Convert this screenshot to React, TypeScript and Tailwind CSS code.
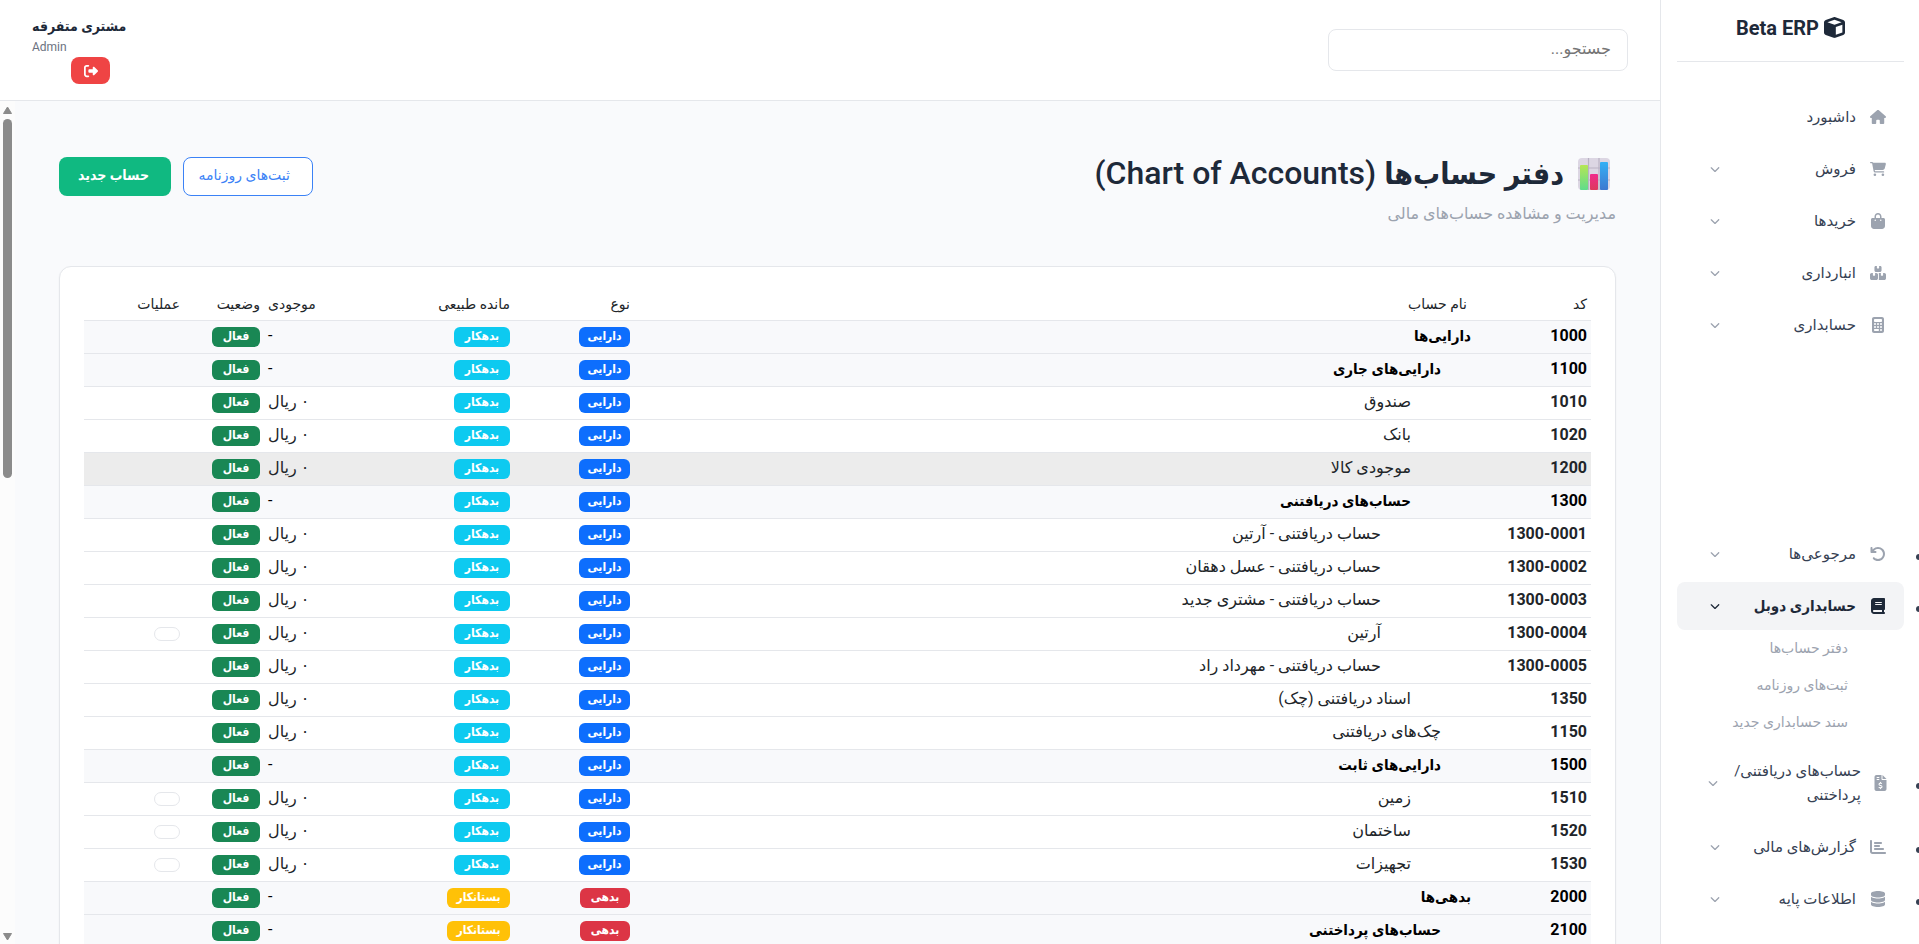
import type { ReactNode } from "react";
import type { IconType } from "react-icons";
import {
  FaArrowRotateLeft,
  FaBagShopping,
  FaBook,
  FaBoxesStacked,
  FaCalculator,
  FaCartShopping,
  FaChartBar,
  FaChevronDown,
  FaCube,
  FaDatabase,
  FaFileInvoiceDollar,
  FaHouse,
  FaRightFromBracket,
} from "react-icons/fa6";

type NavItem = {
  label: string;
  icon: IconType;
  active?: boolean;
  wide?: boolean;
  plain?: boolean;
  children?: string[];
};

const mainNav: NavItem[] = [
  { label: "داشبورد", icon: FaHouse, plain: true },
  { label: "فروش", icon: FaCartShopping },
  { label: "خریدها", icon: FaBagShopping },
  { label: "انبارداری", icon: FaBoxesStacked },
  { label: "حسابداری", icon: FaCalculator },
];

const extraNav: NavItem[] = [
  { label: "مرجوعی‌ها", icon: FaArrowRotateLeft },
  {
    label: "حسابداری دوبل",
    icon: FaBook,
    active: true,
    children: ["دفتر حساب‌ها", "ثبت‌های روزنامه", "سند حسابداری جدید"],
  },
  {
    label: "حساب‌های دریافتنی/پرداختنی",
    icon: FaFileInvoiceDollar,
    wide: true,
  },
  { label: "گزارش‌های مالی", icon: FaChartBar },
  { label: "اطلاعات پایه", icon: FaDatabase },
];

type Account = {
  code: string;
  name: string;
  level: 0 | 1 | 2 | 3;
  group?: boolean;
  hovered?: boolean;
  editable?: boolean;
  debt?: boolean;
};

const accounts: Account[] = [
  { code: "1000", name: "دارایی‌ها", level: 0, group: true },
  { code: "1100", name: "دارایی‌های جاری", level: 1, group: true },
  { code: "1010", name: "صندوق", level: 2 },
  { code: "1020", name: "بانک", level: 2 },
  { code: "1200", name: "موجودی کالا", level: 2, hovered: true },
  { code: "1300", name: "حساب‌های دریافتنی", level: 2, group: true },
  { code: "1300-0001", name: "حساب دریافتنی - آرتین", level: 3 },
  { code: "1300-0002", name: "حساب دریافتنی - عسل دهقان", level: 3 },
  { code: "1300-0003", name: "حساب دریافتنی - مشتری جدید", level: 3 },
  { code: "1300-0004", name: "آرتین", level: 3, editable: true },
  { code: "1300-0005", name: "حساب دریافتنی - مهرداد راد", level: 3 },
  { code: "1350", name: "اسناد دریافتنی (چک)", level: 2 },
  { code: "1150", name: "چک‌های دریافتنی", level: 1 },
  { code: "1500", name: "دارایی‌های ثابت", level: 1, group: true },
  { code: "1510", name: "زمین", level: 2, editable: true },
  { code: "1520", name: "ساختمان", level: 2, editable: true },
  { code: "1530", name: "تجهیزات", level: 2, editable: true },
  { code: "2000", name: "بدهی‌ها", level: 0, group: true, debt: true },
  { code: "2100", name: "حساب‌های پرداختنی", level: 1, group: true, debt: true },
];

const indent = ["pr-0", "pr-[30px]", "pr-[60px]", "pr-[90px]"];

// the bold Persian face runs wide, so bold labels use the condensed cut
const boldFont = "font-[Roboto,'DejaVu_Sans_Condensed','DejaVu_Sans',sans-serif]";

function Badge({ className, children }: { className: string; children: ReactNode }) {
  return (
    <span
      className={`flex h-5 items-center justify-center rounded-md pb-[2px] text-xs font-bold text-white ${boldFont} ${className}`}
    >
      {children}
    </span>
  );
}

function NavEntry({ item, bullet }: { item: NavItem; bullet?: boolean }) {
  const Icon = item.icon;
  return (
    <li className="relative mb-1">
      {bullet && (
        <span className="absolute top-1/2 -right-[18px] size-[6px] rounded-full bg-gray-700" />
      )}
      <a
        href="#"
        className={`flex items-center rounded-lg px-4 py-3 text-[15px] leading-6 ${
          item.active ? `bg-gray-100 font-semibold text-gray-800 ${boldFont}` : "text-gray-700"
        }`}
      >
        <span
          className={`flex shrink-0 justify-center ${item.wide ? "w-[15px]" : "w-5"} ${
            item.active ? "text-gray-800" : "text-[#9ca3af]"
          }`}
        >
          <Icon className="h-4 w-auto" />
        </span>
        <span className="mr-3 flex-1">{item.label}</span>
        {!item.plain && (
          <FaChevronDown
            className={`size-[10px] shrink-0 ${item.wide ? "ml-[15px]" : "ml-[17px]"} ${
              item.active ? "text-gray-800" : "text-[#9ca3af]"
            }`}
          />
        )}
      </a>
    </li>
  );
}

function Sidebar() {
  return (
    <aside className="w-[259px] shrink-0 border-l border-gray-200 bg-white pr-[15px] pl-4">
      <div className="flex h-[62px] items-start justify-center gap-[5px] border-b border-gray-200 pt-[14px] text-xl leading-7 font-bold text-gray-800">
        <FaCube className="mt-[3px] h-[21px] w-auto" />
        <span>Beta ERP</span>
      </div>
      <nav className="pt-[31px]">
        <ul>
          {mainNav.map((item) => (
            <NavEntry key={item.label} item={item} />
          ))}
        </ul>
        <ul className="mt-[181px]">
          {extraNav.map((item) => (
            <div key={item.label} className="contents">
              <NavEntry item={item} bullet />
              {item.children && (
                <li>
                  <ul className="-mt-1 mb-[6px] pr-14">
                    {item.children.map((child) => (
                      <li key={child}>
                        <a href="#" className="block text-sm leading-[37px] text-[#9ca3af]">
                          {child}
                        </a>
                      </li>
                    ))}
                  </ul>
                </li>
              )}
            </div>
          ))}
        </ul>
      </nav>
    </aside>
  );
}

function Topbar() {
  return (
    <header className="flex h-[101px] shrink-0 items-start justify-between border-b border-gray-200 bg-white px-8">
      <input
        type="search"
        aria-label="جستجو"
        placeholder="جستجو..."
        className="mt-[29px] h-[42px] w-[300px] rounded-lg border border-gray-200 px-4 pb-[3px] text-base placeholder:text-[#757575]"
      />
      <div className="flex flex-col pt-[14px]">
        <span className={`text-sm leading-6 font-semibold text-gray-800 ${boldFont}`}>
          مشتری متفرقه
        </span>
        <span className="text-left text-xs leading-[19px] text-[#6b7280]">Admin</span>
        <button
          type="button"
          aria-label="خروج"
          className="mr-4 flex h-[27px] w-[39px] items-center justify-center rounded-lg bg-[#ef4444] text-white"
        >
          <FaRightFromBracket className="size-[14px]" />
        </button>
      </div>
    </header>
  );
}

function ChartEmoji() {
  return (
    <svg viewBox="0 0 32 32" className="size-8" aria-hidden="true">
      <defs>
        <linearGradient id="green" x1="0" y1="0" x2="0" y2="1">
          <stop offset="0" stopColor="#b5e655" />
          <stop offset="1" stopColor="#5fdc8c" />
        </linearGradient>
        <linearGradient id="pink" x1="0" y1="0" x2="0" y2="1">
          <stop offset="0" stopColor="#f02a8c" />
          <stop offset="1" stopColor="#dd3a5c" />
        </linearGradient>
        <linearGradient id="blue" x1="0" y1="0" x2="0" y2="1">
          <stop offset="0" stopColor="#33b0f5" />
          <stop offset="1" stopColor="#3f78d0" />
        </linearGradient>
      </defs>
      <rect x="0" y="0" width="32" height="32" rx="4" fill="#dcd6e3" />
      <path d="M10.5 0v32M21 0v32M0 10h32M0 22h32" stroke="#b9b1c4" strokeWidth="1.2" />
      <rect x="2" y="7" width="8" height="25" rx="1" fill="url(#green)" />
      <rect x="12" y="16" width="8" height="16" rx="1" fill="url(#pink)" />
      <rect x="22" y="4" width="8" height="28" rx="1" fill="url(#blue)" />
    </svg>
  );
}

function AccountRow({ account }: { account: Account }) {
  const { group, hovered, debt } = account;
  const tone = group
    ? "bg-[#f8f9fb] text-black"
    : hovered
      ? "bg-[#ececec] text-[#212529]"
      : "text-[#212529]";
  return (
    <tr className={`h-[33px] border-b border-gray-200 ${tone}`}>
      <td className="px-1 pb-[2px] text-right font-bold">{account.code}</td>
      <td
        className={`pb-[2px] ${indent[account.level]} ${
          group ? `text-[15px] font-bold ${boldFont}` : ""
        }`}
      >
        {account.name}
      </td>
      <td className="px-1">
        {debt ? (
          <Badge className="w-[50px] bg-[#dc3545]">بدهی</Badge>
        ) : (
          <Badge className="w-[51px] bg-[#0d6efd]">دارایی</Badge>
        )}
      </td>
      <td className="px-1">
        {debt ? (
          <Badge className="w-[63px] bg-[#ffc107]">بستانکار</Badge>
        ) : (
          <Badge className="w-[56px] bg-[#0dcaf0]">بدهکار</Badge>
        )}
      </td>
      <td className="px-1 pb-[2px] text-left">{group ? "-" : "۰ ریال"}</td>
      <td className="px-1">
        <Badge className="w-12 bg-[#198754]">فعال</Badge>
      </td>
      <td className="px-1">
        {account.editable && (
          <button
            type="button"
            aria-label="ویرایش"
            className="block h-[14px] w-[26px] rounded-full border border-gray-200"
          />
        )}
      </td>
    </tr>
  );
}

function AccountsTable() {
  return (
    <section className="mt-10 rounded-xl border border-gray-200 bg-white p-6 shadow-xs">
      <table className="w-full table-fixed border-collapse text-base leading-6">
        <thead>
          <tr className="h-[29px] border-b border-gray-200 text-sm text-[#212529] [&>th]:px-1 [&>th]:pb-[3px] [&>th]:text-right [&>th]:font-medium">
            <th className="w-[120px]">کد</th>
            <th>نام حساب</th>
            <th className="w-[120px]">نوع</th>
            <th className="w-[150px]">مانده طبیعی</th>
            <th className="w-[100px] text-left!">موجودی</th>
            <th className="w-[80px]">وضعیت</th>
            <th className="w-[100px]">عملیات</th>
          </tr>
        </thead>
        <tbody>
          {accounts.map((account) => (
            <AccountRow key={account.code} account={account} />
          ))}
        </tbody>
      </table>
    </section>
  );
}

function Scrollbar() {
  return (
    <div className="flex w-[15px] shrink-0 flex-col items-center bg-[#fcfcfc] pt-[5px] pb-[3px] text-[#8b8b8b]">
      <svg viewBox="0 0 9 8" className="h-2 w-[9px]" fill="currentColor">
        <path d="M4.500 1 8.500 7.500H0.500Z" stroke="currentColor" strokeLinejoin="round" />
      </svg>
      <div className="mt-[5px] h-[359px] w-[9px] rounded-full bg-[#8b8b8b]" />
      <svg viewBox="0 0 9 8" className="mt-auto h-2 w-[9px]" fill="currentColor">
        <path d="M4.500 7 8.500 0.500H0.500Z" stroke="currentColor" strokeLinejoin="round" />
      </svg>
    </div>
  );
}

export default function App() {
  return (
    <div
      dir="rtl"
      className="flex h-screen overflow-hidden bg-[#f9fafc] font-[Roboto,'DejaVu_Sans',sans-serif]"
    >
      <Sidebar />
      <div className="flex min-w-0 flex-1 flex-col">
        <Topbar />
        <div className="flex min-h-0 flex-1">
          <main className="min-w-0 flex-1 overflow-hidden px-11 pt-12">
            <div className="flex items-start justify-between">
              <div>
                <h1 className="flex items-center gap-[14px] pr-[6px] text-[32px] leading-[48px] font-medium text-gray-800">
                  <ChartEmoji />
                  <span>
                    <span className={`text-3xl leading-[48px] font-semibold ${boldFont}`}>
                      دفتر حساب‌ها
                    </span>{" "}
                    (Chart of Accounts)
                  </span>
                </h1>
                <p className="mt-1 text-base leading-6 text-[#9ca3af]">
                  مدیریت و مشاهده حساب‌های مالی
                </p>
              </div>
              <div className="mt-2 flex gap-3 text-sm">
                <a
                  href="#"
                  className="flex h-[39px] w-[130px] items-center rounded-lg border border-[#3b82f6] bg-white pr-[22px] pb-[3px] whitespace-nowrap text-[#3b82f6]"
                >
                  ثبت‌های روزنامه
                </a>
                <a
                  href="#"
                  className={`flex h-[39px] w-[112px] items-center rounded-lg bg-[#10b981] pr-[22px] pb-[3px] font-semibold whitespace-nowrap text-white ${boldFont}`}
                >
                  حساب جدید
                </a>
              </div>
            </div>
            <AccountsTable />
          </main>
          <Scrollbar />
        </div>
      </div>
    </div>
  );
}
